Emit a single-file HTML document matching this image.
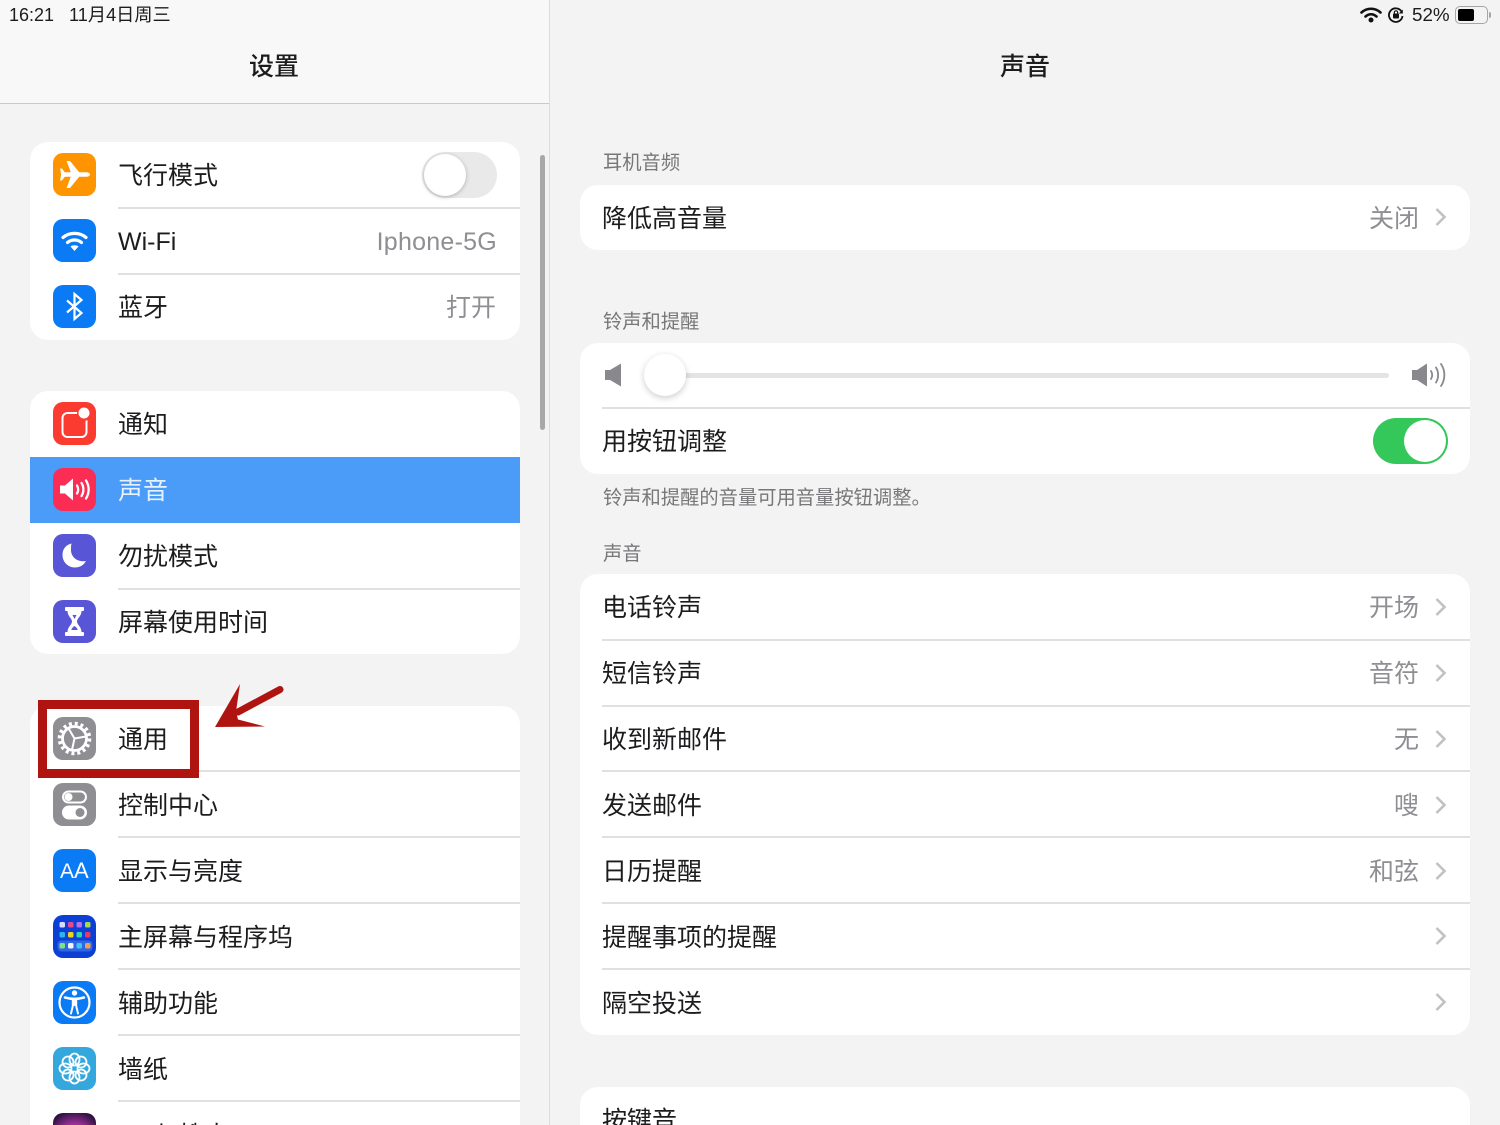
<!DOCTYPE html>
<html lang="zh"><head><meta charset="utf-8"><title>设置</title>
<style>
*{box-sizing:border-box}
html,body{margin:0;padding:0;width:1500px;height:1125px;overflow:hidden}
#root{position:relative;width:1500px;height:1125px;overflow:hidden;background:#f3f3f3;font-family:"Liberation Sans","Noto Sans CJK SC",sans-serif;color:#1c1c1e}
.a{position:absolute}
.card{position:absolute;background:#fff;border-radius:18px;overflow:hidden}
.t{position:absolute;font-size:25px;line-height:34px;height:34px;white-space:nowrap;color:#1c1c1e;margin-top:1px}
.v{position:absolute;font-size:25px;line-height:34px;height:34px;white-space:nowrap;color:#8e8e93;text-align:right;margin-top:1px}
.h{position:absolute;font-size:19.3px;line-height:24px;white-space:nowrap;color:#77777a;left:603px;margin-top:2px}
.sep{position:absolute;height:2px;background:#e0e0e2}
.ic{position:absolute;left:53px;width:43px;height:43px;border-radius:10px}
.ic svg{display:block;width:43px;height:43px}
.ch{position:absolute;left:1434px;width:14px;height:20px}
</style></head><body><div id="root">

<!-- sidebar -->
<div class="a" style="left:0;top:0;width:549px;height:1125px;background:#f3f3f3"></div>
<div class="a" style="left:0;top:0;width:549px;height:103px;background:#f8f8f8"></div>
<div class="a" style="left:0;top:103px;width:549px;height:1px;background:#c9c9cb"></div>
<div class="a" style="left:549px;top:0;width:1px;height:1125px;background:#dcdcde"></div>
<div class="a" style="left:540px;top:155px;width:5px;height:275px;border-radius:3px;background:#a8a8aa"></div>

<div class="a" style="left:9px;top:3px;font-size:18px;line-height:24px;white-space:nowrap">16:21</div>
<div class="a" style="left:69px;top:3px;font-size:18.200px;line-height:24px;white-space:nowrap">11月4日周三</div>
<div class="a" style="left:249px;top:50px;font-size:25px;line-height:34px;font-weight:500;white-space:nowrap">设置</div>
<div class="a" style="left:1000px;top:50px;font-size:25px;line-height:34px;font-weight:500;white-space:nowrap">声音</div>

<!-- status -->
<svg class="a" style="left:1358px;top:5px" width="26" height="20" viewBox="0 0 26 20"><g fill="none" stroke="#111" stroke-width="2.600" stroke-linecap="round"><path d="M3.500 7.500C9 2.500 17 2.500 22.500 7.500"/><path d="M7.500 11.500C10.800 8.500 15.200 8.500 18.500 11.500"/></g><circle cx="13" cy="15" r="2.500" fill="#111"/></svg>
<svg class="a" style="left:1387px;top:6px" width="18" height="18" viewBox="0 0 18 18"><path d="M14.500 5.500A6.800 6.800 0 1 0 15.500 10" fill="none" stroke="#111" stroke-width="1.800"/><path d="M15.800 3.500v4h-4z" fill="#111"/><rect x="6" y="7.500" width="6" height="5" rx="1" fill="#111"/><path d="M7.300 7.500V6.500a1.700 1.700 0 0 1 3.400 0v1" fill="none" stroke="#111" stroke-width="1.200"/></svg>
<div class="a" style="left:1412px;top:3px;font-size:18.800px;line-height:24px;white-space:nowrap">52%</div>
<div class="a" style="left:1455px;top:6px;width:33px;height:18px;border:1.500px solid #a5a5a7;border-radius:5px"></div>
<div class="a" style="left:1458px;top:9px;width:16px;height:12px;background:#000;border-radius:2px"></div>
<div class="a" style="left:1489px;top:12px;width:2px;height:6px;background:#a5a5a7;border-radius:0 2px 2px 0"></div>

<!-- group 1 -->
<div class="card" style="left:30px;top:142px;width:490px;height:198px"></div>
<div class="sep" style="left:118px;top:207px;width:402px"></div>
<div class="sep" style="left:118px;top:273px;width:402px"></div>
<div class="ic" style="top:153px;background:#fe9500"><svg viewBox="0 0 43 43"><path d="M37 21.500c0-1.500-2-2.300-3.800-2.300h-7L17 8h-3.400l4.200 11.200h-6L9 15.500H7l1.200 6-1.200 6h2l2.800-3.700h6L13.600 35H17l9.200-11.200h7c1.800 0 3.800-.8 3.800-2.300z" fill="#fff"/></svg></div>
<div class="t" style="left:118px;top:158px">飞行模式</div>
<div class="a" style="left:422px;top:152px;width:75px;height:46px;border-radius:23px;background:#e9e9ea"></div>
<div class="a" style="left:424px;top:154px;width:42px;height:42px;border-radius:50%;background:#fff;box-shadow:0 1px 4px rgba(0,0,0,.25)"></div>

<div class="ic" style="top:219px;background:#0a7bf5"><svg viewBox="0 0 43 43"><g fill="none" stroke="#fff" stroke-width="3.200" stroke-linecap="round"><path d="M10 18.500C16.500 13 26.500 13 33 18.500"/><path d="M14.500 23.500C18.500 20.200 24.500 20.200 28.500 23.500"/></g><path d="M17.500 27.500c2.400-1.600 5.600-1.600 8 0l-4 4.500z" fill="#fff"/></svg></div>
<div class="t" style="left:118px;top:224px">Wi-Fi</div>
<div class="v" style="left:320px;top:224px;width:177px;letter-spacing:.25px">Iphone-5G</div>

<div class="ic" style="top:285px;background:#0a7bf5"><svg viewBox="0 0 43 43"><path d="M14 15.500l14.500 12.500L21.500 34V9l7 6L14 27.500" fill="none" stroke="#fff" stroke-width="2.200" stroke-linejoin="miter"/></svg></div>
<div class="t" style="left:118px;top:290px">蓝牙</div>
<div class="v" style="left:320px;top:290px;width:176px">打开</div>

<!-- group 2 -->
<div class="card" style="left:30px;top:391px;width:490px;height:263px">
  <div class="a" style="left:0;top:66px;width:490px;height:66px;background:#4a9cf8"></div>
</div>
<div class="sep" style="left:118px;top:588px;width:402px"></div>
<div class="ic" style="top:402px;background:#fb3b30"><svg viewBox="0 0 43 43"><rect x="9.500" y="11" width="24" height="24" rx="5" fill="none" stroke="#fff" stroke-width="2"/><circle cx="31" cy="12" r="7" fill="#fb3b30"/><circle cx="31" cy="11" r="5.500" fill="#fff"/></svg></div>
<div class="t" style="left:118px;top:407px">通知</div>
<div class="ic" style="top:468px;background:#fb2d55"><svg viewBox="0 0 43 43"><path d="M7 17.500h5l8-7v22l-8-7H7z" fill="#fff"/><g fill="none" stroke="#fff" stroke-width="2.300" stroke-linecap="round"><path d="M24 17.500c1.500 2.500 1.500 5.500 0 8"/><path d="M28.500 15c2.500 4 2.500 9 0 13"/><path d="M33 12.500c3.500 5.500 3.500 12.500 0 18"/></g></svg></div>
<div class="t" style="left:118px;top:473px;color:#e6f2ff">声音</div>
<div class="ic" style="top:534px;background:#5856d6"><svg viewBox="0 0 43 43"><path d="M18.500 9.500C12 11 9.500 16 9.500 21c0 7 5.500 12.500 12.500 12.500 5 0 8.800-2.500 11-6.500-8 1.500-15-3.500-15-11 0-2.500 0-4.500.5-6.500z" fill="#fff"/></svg></div>
<div class="t" style="left:118px;top:539px">勿扰模式</div>
<div class="ic" style="top:600px;background:#5856d6"><svg viewBox="0 0 43 43"><rect x="12" y="7" width="19" height="4" rx="1" fill="#fff"/><rect x="12" y="32" width="19" height="4" rx="1" fill="#fff"/><path d="M14.500 11h14c0 5-4.500 7.500-4.500 10.500s4.500 5.500 4.500 10.500h-14c0-5 4.500-7.500 4.500-10.500S14.500 16 14.500 11z" fill="#fff"/><path d="M19.500 15h4l-2 4zM18.300 30c.5-2 1.800-3 3.200-4 1.400 1 2.700 2 3.200 4z" fill="#5856d6"/></svg></div>
<div class="t" style="left:118px;top:605px">屏幕使用时间</div>

<!-- group 3 -->
<div class="card" style="left:30px;top:706px;width:490px;height:430px;border-radius:18px 18px 0 0"></div>
<div class="sep" style="left:118px;top:770px;width:402px"></div>
<div class="sep" style="left:118px;top:836px;width:402px"></div>
<div class="sep" style="left:118px;top:902px;width:402px"></div>
<div class="sep" style="left:118px;top:968px;width:402px"></div>
<div class="sep" style="left:118px;top:1034px;width:402px"></div>
<div class="sep" style="left:118px;top:1100px;width:402px"></div>

<div class="ic" style="top:717px;background:#8e8e93"><svg viewBox="0 0 43 43"><circle cx="21.500" cy="21.500" r="12" fill="none" stroke="#fff" stroke-width="2.800"/><circle cx="21.500" cy="21.500" r="15" fill="none" stroke="#fff" stroke-width="3.600" stroke-dasharray="3 2.900"/><path d="M21.500 21.500L15 10.500M21.500 21.500L33 19.500M21.500 21.500L19 33" stroke="#fff" stroke-width="2" fill="none"/></svg></div>
<div class="t" style="left:118px;top:722px">通用</div>
<div class="ic" style="top:783px;background:#8e8e93"><svg viewBox="0 0 43 43"><rect x="9" y="7.500" width="25" height="13" rx="6.500" fill="#fff"/><rect x="11" y="9.500" width="21" height="9" rx="4.500" fill="#8e8e93"/><circle cx="15.500" cy="14" r="4" fill="#fff"/><rect x="9" y="22.500" width="25" height="14" rx="7" fill="#fff"/><circle cx="27" cy="29.500" r="4.500" fill="#8e8e93"/></svg></div>
<div class="t" style="left:118px;top:788px">控制中心</div>
<div class="ic" style="top:849px;background:#0a7bf5"><div class="a" style="left:7px;top:8px;width:33px;height:28px;line-height:28px;color:#fff;white-space:nowrap"><span style="font-size:21px">A</span><span style="font-size:22px">A</span></div></div>
<div class="t" style="left:118px;top:854px">显示与亮度</div>
<div class="ic" style="top:915px;background:#0c3fd6"><svg viewBox="0 0 43 43"><g><rect x="6.500" y="7" width="5.500" height="5.500" rx="1.500" fill="#d9dcff"/><rect x="15" y="7" width="5.500" height="5.500" rx="1.500" fill="#e84a8e"/><rect x="23.500" y="7" width="5.500" height="5.500" rx="1.500" fill="#b86ee8"/><rect x="32" y="7" width="5.500" height="5.500" rx="1.500" fill="#a8d84e"/><rect x="6.500" y="17" width="5.500" height="5.500" rx="1.500" fill="#29b6e8"/><rect x="15" y="17" width="5.500" height="5.500" rx="1.500" fill="#f4cf1e"/><rect x="23.500" y="17" width="5.500" height="5.500" rx="1.500" fill="#2fd8a8"/><rect x="32" y="17" width="5.500" height="5.500" rx="1.500" fill="#e83a5a"/></g><rect x="4.500" y="25.500" width="35" height="11" rx="4" fill="#2f66e4"/><rect x="6.500" y="28" width="5.500" height="5.500" rx="1.500" fill="#7fe08a"/><rect x="15" y="28" width="5.500" height="5.500" rx="1.500" fill="#f2f2f8"/><rect x="23.500" y="28" width="5.500" height="5.500" rx="1.500" fill="#45c4f0"/><rect x="32" y="28" width="5.500" height="5.500" rx="1.500" fill="#f0a050"/></svg></div>
<div class="t" style="left:118px;top:920px">主屏幕与程序坞</div>
<div class="ic" style="top:981px;background:#0a7bf5"><svg viewBox="0 0 43 43"><circle cx="21.500" cy="21.500" r="15" fill="none" stroke="#fff" stroke-width="2.200"/><circle cx="21.500" cy="12" r="2.700" fill="#fff"/><path d="M12 16.500c6 1.700 13 1.700 19 0" fill="none" stroke="#fff" stroke-width="2.500" stroke-linecap="round"/><path d="M21.500 17.500V24M19.800 18v7l-1.800 7.500M23.200 18v7l1.800 7.500" fill="none" stroke="#fff" stroke-width="2" stroke-linecap="round"/></svg></div>
<div class="t" style="left:118px;top:986px">辅助功能</div>
<div class="ic" style="top:1047px;background:#34a7dc"><svg viewBox="0 0 43 43"><g fill="none" stroke="#fff" stroke-width="1.800"><ellipse cx="21.500" cy="12.500" rx="5" ry="6"/><ellipse cx="21.500" cy="30.500" rx="5" ry="6"/><ellipse cx="12.500" cy="21.500" rx="6" ry="5"/><ellipse cx="30.500" cy="21.500" rx="6" ry="5"/><ellipse cx="15" cy="15" rx="5.500" ry="5.500"/><ellipse cx="28" cy="15" rx="5.500" ry="5.500"/><ellipse cx="15" cy="28" rx="5.500" ry="5.500"/><ellipse cx="28" cy="28" rx="5.500" ry="5.500"/></g></svg></div>
<div class="t" style="left:118px;top:1052px">墙纸</div>
<div class="ic" style="top:1113px;background:radial-gradient(circle at 50% 60%,#d04aa8 0,#9a2f98 45%,#1c0c30 90%)"></div>
<div class="t" style="left:118px;top:1118px">Siri与搜索</div>

<!-- annotation -->
<div class="a" style="left:38px;top:700px;width:161px;height:78px;border:9px solid #b01410"></div>
<svg class="a" style="left:210px;top:680px" width="80" height="52" viewBox="0 0 80 52"><path d="M70 9.500L28 32" stroke="#b01410" stroke-width="7" stroke-linecap="round" fill="none"/><path d="M30 4L5 47l50-.5-27-7-2-8z" fill="#b01410"/></svg>

<!-- right pane -->
<div class="h" style="top:150px">耳机音频</div>
<div class="card" style="left:580px;top:185px;width:890px;height:65px"></div>
<div class="t" style="left:602px;top:201px">降低高音量</div>
<div class="v" style="left:1219px;top:201px;width:200px">关闭</div>
<svg class="ch" style="top:207px" viewBox="0 0 14 20"><path d="M2.500 2l8 8-8 8" fill="none" stroke="#c1c1c5" stroke-width="2.600"/></svg>

<div class="h" style="top:309px">铃声和提醒</div>
<div class="card" style="left:580px;top:343px;width:890px;height:131px"></div>
<div class="sep" style="left:602px;top:407px;width:868px"></div>
<svg class="a" style="left:603px;top:362px" width="20" height="26" viewBox="0 0 20 26"><path d="M2 8h5l11-6.500v23L7 18H2z" fill="#89898d"/></svg>
<div class="a" style="left:660px;top:373px;width:729px;height:5px;border-radius:3px;background:#e4e4e6"></div>
<div class="a" style="left:644px;top:354px;width:42px;height:42px;border-radius:50%;background:#fff;box-shadow:0 2px 7px rgba(0,0,0,.2)"></div>
<svg class="a" style="left:1411px;top:361px" width="36" height="28" viewBox="0 0 36 28"><path d="M1 9h5l10-6.500v23L6 19H1z" fill="#89898d"/><g fill="none" stroke="#89898d" stroke-width="1.800" stroke-linecap="round"><path d="M20 10c1.500 2.500 1.500 5.500 0 8"/><path d="M25 6.500c2.800 4.500 2.800 10.500 0 15"/><path d="M30 3c4.500 6.500 4.500 15.500 0 22"/></g></svg>
<div class="t" style="left:602px;top:424px">用按钮调整</div>
<div class="a" style="left:1373px;top:418px;width:75px;height:46px;border-radius:23px;background:#34c759"></div>
<div class="a" style="left:1404px;top:420px;width:42px;height:42px;border-radius:50%;background:#fff"></div>
<div class="h" style="top:485px">铃声和提醒的音量可用音量按钮调整。</div>

<div class="h" style="top:541px">声音</div>
<div class="card" style="left:580px;top:574px;width:890px;height:461px"></div>
<div class="sep" style="left:602px;top:639px;width:868px"></div>
<div class="sep" style="left:602px;top:705px;width:868px"></div>
<div class="sep" style="left:602px;top:770px;width:868px"></div>
<div class="sep" style="left:602px;top:836px;width:868px"></div>
<div class="sep" style="left:602px;top:902px;width:868px"></div>
<div class="sep" style="left:602px;top:968px;width:868px"></div>

<div class="t" style="left:602px;top:590px">电话铃声</div>
<div class="v" style="left:1219px;top:590px;width:200px">开场</div>
<svg class="ch" style="top:597px" viewBox="0 0 14 20"><path d="M2.500 2l8 8-8 8" fill="none" stroke="#c1c1c5" stroke-width="2.600"/></svg>
<div class="t" style="left:602px;top:656px">短信铃声</div>
<div class="v" style="left:1219px;top:656px;width:200px">音符</div>
<svg class="ch" style="top:663px" viewBox="0 0 14 20"><path d="M2.500 2l8 8-8 8" fill="none" stroke="#c1c1c5" stroke-width="2.600"/></svg>
<div class="t" style="left:602px;top:722px">收到新邮件</div>
<div class="v" style="left:1219px;top:722px;width:200px">无</div>
<svg class="ch" style="top:729px" viewBox="0 0 14 20"><path d="M2.500 2l8 8-8 8" fill="none" stroke="#c1c1c5" stroke-width="2.600"/></svg>
<div class="t" style="left:602px;top:788px">发送邮件</div>
<div class="v" style="left:1219px;top:788px;width:200px">嗖</div>
<svg class="ch" style="top:795px" viewBox="0 0 14 20"><path d="M2.500 2l8 8-8 8" fill="none" stroke="#c1c1c5" stroke-width="2.600"/></svg>
<div class="t" style="left:602px;top:854px">日历提醒</div>
<div class="v" style="left:1219px;top:854px;width:200px">和弦</div>
<svg class="ch" style="top:861px" viewBox="0 0 14 20"><path d="M2.500 2l8 8-8 8" fill="none" stroke="#c1c1c5" stroke-width="2.600"/></svg>
<div class="t" style="left:602px;top:920px">提醒事项的提醒</div>
<svg class="ch" style="top:926px" viewBox="0 0 14 20"><path d="M2.500 2l8 8-8 8" fill="none" stroke="#c1c1c5" stroke-width="2.600"/></svg>
<div class="t" style="left:602px;top:986px">隔空投送</div>
<svg class="ch" style="top:992px" viewBox="0 0 14 20"><path d="M2.500 2l8 8-8 8" fill="none" stroke="#c1c1c5" stroke-width="2.600"/></svg>

<div class="card" style="left:580px;top:1087px;width:890px;height:60px"></div>
<div class="t" style="left:602px;top:1103px">按键音</div>

</div></body></html>
